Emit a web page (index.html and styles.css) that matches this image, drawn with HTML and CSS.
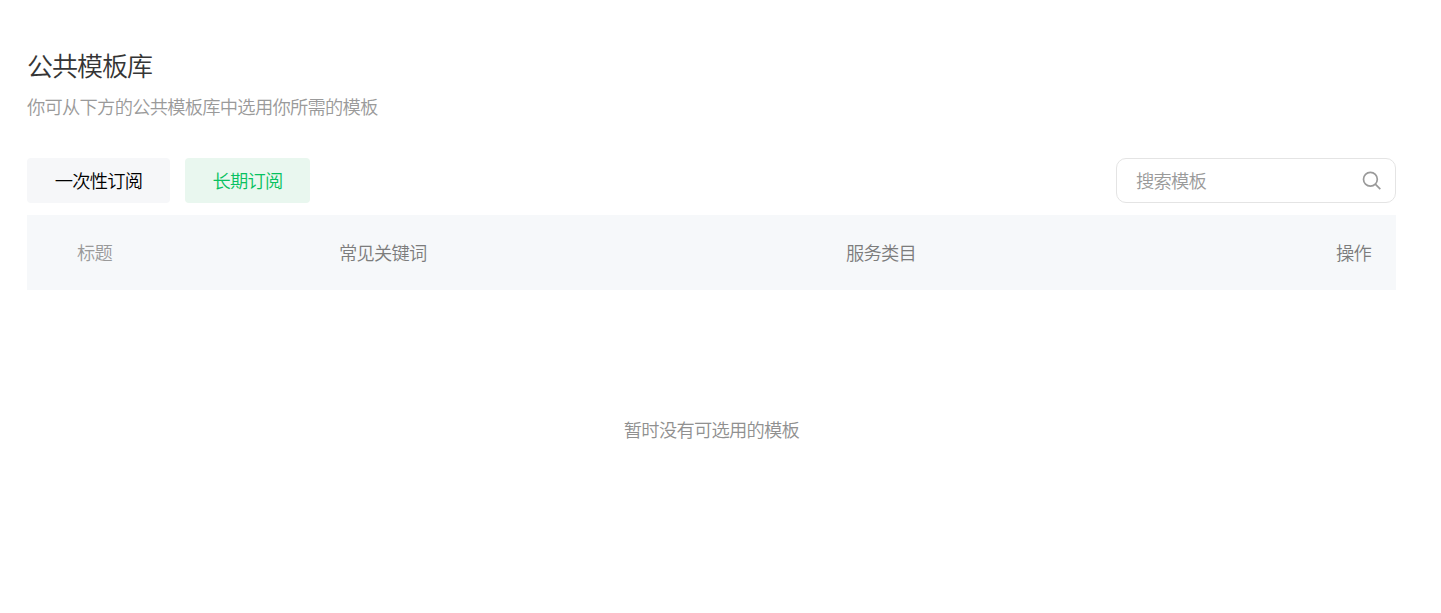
FILE: index.html
```
<!DOCTYPE html>
<html lang="zh-CN">
<head>
  <meta charset="UTF-8">
  <meta name="viewport" content="width=device-width, initial-scale=1.0">
  <title>公共模板库</title>
  <link rel="stylesheet" href="styles.css">
</head>
<body>
  <div class="container">
    <h1>公共模板库</h1>
    <p class="desc">你可从下方的公共模板库中选用你所需的模板</p>

    <div class="toolbar">
      <div class="tabs">
        <button class="tab">一次性订阅</button>
        <button class="tab active">长期订阅</button>
      </div>
      <div class="search">
        <input type="text" placeholder="搜索模板">
        <svg class="search-icon" width="20" height="20" viewBox="0 0 20 20">
          <circle cx="8.4" cy="8.3" r="6.9"></circle>
          <path d="M13.3 13.2L18.3 18.1"></path>
        </svg>
      </div>
    </div>

    <table>
      <thead>
        <tr>
          <th class="col-title">标题</th>
          <th class="col-keyword">常见关键词</th>
          <th class="col-category">服务类目</th>
          <th class="col-action">操作</th>
        </tr>
      </thead>
      <tbody>
        <tr>
          <td class="empty" colspan="4">暂时没有可选用的模板</td>
        </tr>
      </tbody>
    </table>
  </div>
</body>
</html>
```
FILE: styles.css
```
* {
  box-sizing: border-box;
}

body {
  margin: 0;
  background-color: #fff;
  color: #353535;
  font-family: "Noto Sans CJK SC", sans-serif;
  font-size: 18.3px;
  font-weight: 350;
  letter-spacing: -0.75px;
}

.container {
  width: 1369px;
  margin-left: 27px;
  padding-top: 46px;
}

h1 {
  margin: 0;
  font-size: 26px;
  font-weight: 350;
  line-height: 38px;
  letter-spacing: -1px;
}

.desc {
  margin: 8px 0 0;
  line-height: 28px;
  color: #9a9a9a;
}

.toolbar {
  display: flex;
  justify-content: space-between;
  margin-top: 38px;
}

.tabs {
  display: flex;
  gap: 15px;
}

.tab {
  height: 45px;
  padding: 0 0 2px;
  border: none;
  border-radius: 4px;
  background-color: #f6f7f9;
  color: #000;
  font: inherit;
  letter-spacing: inherit;
}

.tab:first-child {
  width: 143px;
}

.tab.active {
  width: 125px;
  background-color: #e9f7ef;
  color: #07c160;
}

.search {
  display: flex;
  align-items: center;
  width: 280px;
  height: 45px;
  padding: 0 13px 0 19px;
  border: 1px solid #e4e4e4;
  border-radius: 10px;
}

.search input {
  flex: 1;
  min-width: 0;
  padding: 0 0 2px;
  border: none;
  outline: none;
  background: none;
  font: inherit;
  letter-spacing: inherit;
}

.search input::placeholder {
  color: #9a9a9a;
}

.search-icon {
  fill: none;
  stroke: #9a9a9a;
  stroke-width: 1.7;
}

table {
  width: 100%;
  margin-top: 12px;
  border-collapse: collapse;
  table-layout: fixed;
}

th {
  height: 75px;
  padding: 0 0 2px;
  background-color: #f6f8fa;
  color: #7c7c7c;
  font-weight: 350;
  text-align: left;
}

.col-title {
  width: 312px;
  padding-left: 50px;
  color: #9a9a9a;
}

.col-keyword {
  width: 507px;
}

.col-action {
  padding-right: 25px;
  text-align: right;
}

.empty {
  height: 279px;
  padding: 0 0 2px;
  color: #909090;
  text-align: center;
}
```
